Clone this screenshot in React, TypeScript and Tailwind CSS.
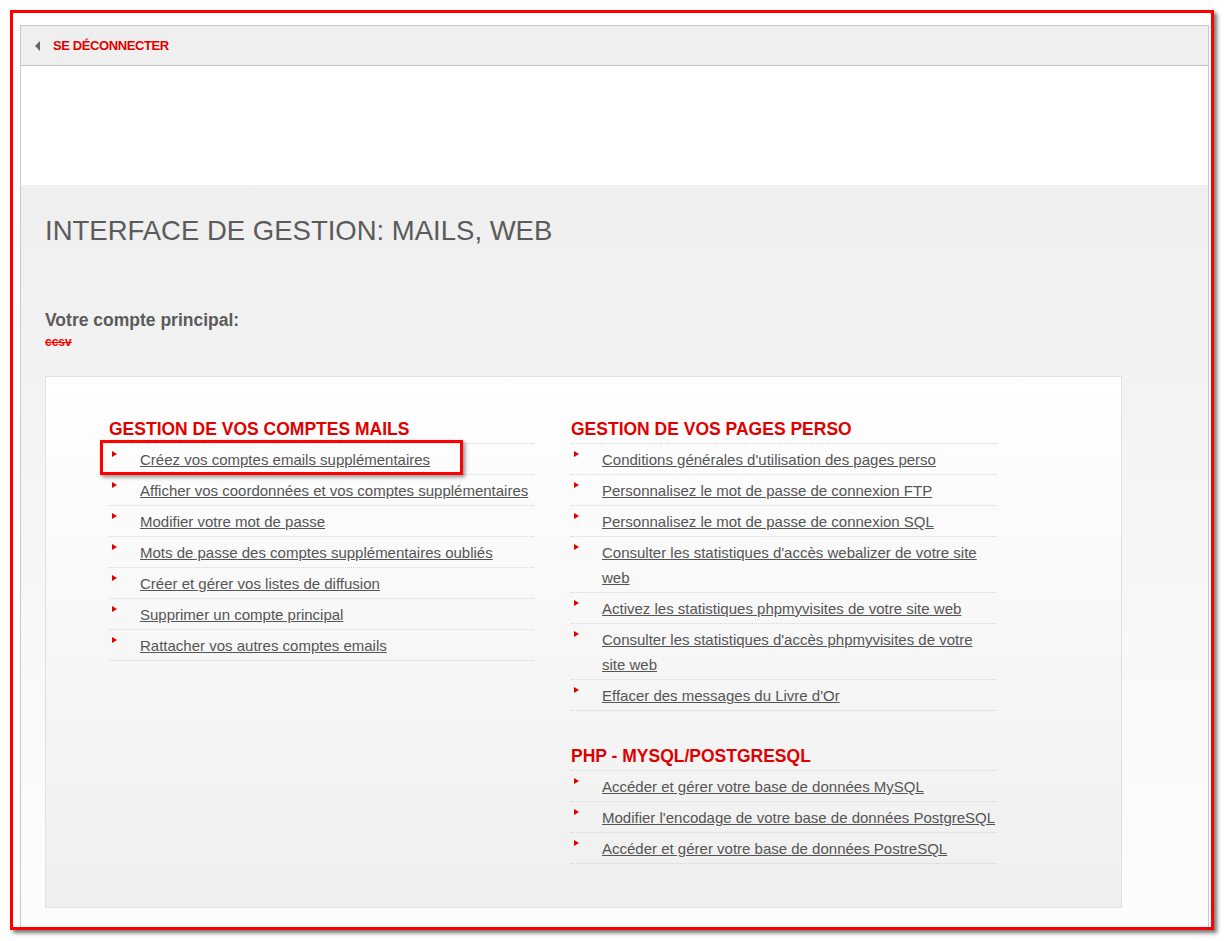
import React from 'react';

type Item = { label: string };

const mails: Item[] = [
  { label: 'Créez vos comptes emails supplémentaires' },
  { label: 'Afficher vos coordonnées et vos comptes supplémentaires' },
  { label: 'Modifier votre mot de passe' },
  { label: 'Mots de passe des comptes supplémentaires oubliés' },
  { label: 'Créer et gérer vos listes de diffusion' },
  { label: 'Supprimer un compte principal' },
  { label: 'Rattacher vos autres comptes emails' },
];

const perso: Item[] = [
  { label: "Conditions générales d'utilisation des pages perso" },
  { label: 'Personnalisez le mot de passe de connexion FTP' },
  { label: 'Personnalisez le mot de passe de connexion SQL' },
  { label: "Consulter les statistiques d'accès webalizer de votre site web" },
  { label: 'Activez les statistiques phpmyvisites de votre site web' },
  { label: "Consulter les statistiques d'accès phpmyvisites de votre site web" },
  { label: "Effacer des messages du Livre d'Or" },
];

const sql: Item[] = [
  { label: 'Accéder et gérer votre base de données MySQL' },
  { label: "Modifier l'encodage de votre base de données PostgreSQL" },
  { label: 'Accéder et gérer votre base de données PostreSQL' },
];

const Section = ({ title, items, className = '' }: { title: string; items: Item[]; className?: string }) => (
  <div className={className}>
    <h2 className="text-[17.5px] leading-[20px] font-bold text-[#e00000] mt-[1px] mb-[4px]">{title}</h2>
    <ul className="border-b border-dotted border-[#d6d6d6]">
      {items.map((item) => (
        <li key={item.label} className="flex border-t border-dotted border-[#d6d6d6] pt-[3px] pb-[2px]">
          <div className="w-[31px] shrink-0 pl-[3px] pt-[4px]">
            <div className="w-0 h-0 border-l-[5px] border-l-[#e00000] border-y-[3px] border-y-transparent" />
          </div>
          <a href="#" className="text-[15px] leading-[25px] text-[#555555] underline">
            {item.label}
          </a>
        </li>
      ))}
    </ul>
  </div>
);

export default function App() {
  return (
    <div className="relative w-[1225px] h-[941px] bg-white p-[10px] font-['Liberation_Sans',Arial,sans-serif] overflow-hidden">
      <div className="w-[1204px] h-[920px] border-[3px] border-[#ff0000] shadow-[3px_3px_4px_rgba(0,0,0,0.55)]">
        <div className="h-full flex flex-col pt-[12px] pl-[7px] pr-[2px]">
          <div className="flex-1 flex flex-col border-x border-t border-[#c9c9c9]">
            {/* top bar */}
            <div className="h-[40px] shrink-0 bg-[#efefef] border-b border-[#c4c4c4] flex items-center pl-[14px]">
              <div className="w-0 h-0 border-r-[5px] border-r-[#666666] border-y-[5px] border-y-transparent" />
              <a href="#" className="ml-[13px] text-[13px] font-bold text-[#e00000] tracking-[-0.4px]">
                SE DÉCONNECTER
              </a>
            </div>

            <div className="h-[119px] shrink-0 bg-white" />

            <div className="flex-1 bg-gradient-to-b from-[#efefef] to-[#fdfdfd] pl-[24px]">
              <h1 className="mt-[30px] text-[27.5px] leading-[32px] text-[#5b5b5b]">
                INTERFACE DE GESTION: MAILS, WEB
              </h1>

              <div className="mt-[63px] text-[17.5px] leading-[20px] font-bold text-[#5b5b5b]">
                Votre compte principal:
              </div>
              <div className="mt-[6px] h-[12px] text-[12px] leading-[12px] font-bold text-[#ff0000] line-through">
                ccsv
              </div>

              <div className="mt-[28px] w-[1077px] h-[532px] border border-[#e2e2e2] bg-gradient-to-b from-white to-[#efefef] pl-[63px] pt-[41px]">
                <div className="flex gap-[37px]">
                  <Section className="w-[425px]" title="GESTION DE VOS COMPTES MAILS" items={mails} />
                  <div className="w-[426px]">
                    <Section title="GESTION DE VOS PAGES PERSO" items={perso} />
                    <Section className="mt-[35px]" title="PHP - MYSQL/POSTGRESQL" items={sql} />
                  </div>
                </div>
              </div>
            </div>
          </div>
        </div>
      </div>

      {/* annotation highlight */}
      <div className="absolute left-[100px] top-[440px] w-[363px] h-[35px] border-[3px] border-[#ff0000] shadow-[2px_2px_4px_rgba(0,0,0,0.45)]" />
    </div>
  );
}
